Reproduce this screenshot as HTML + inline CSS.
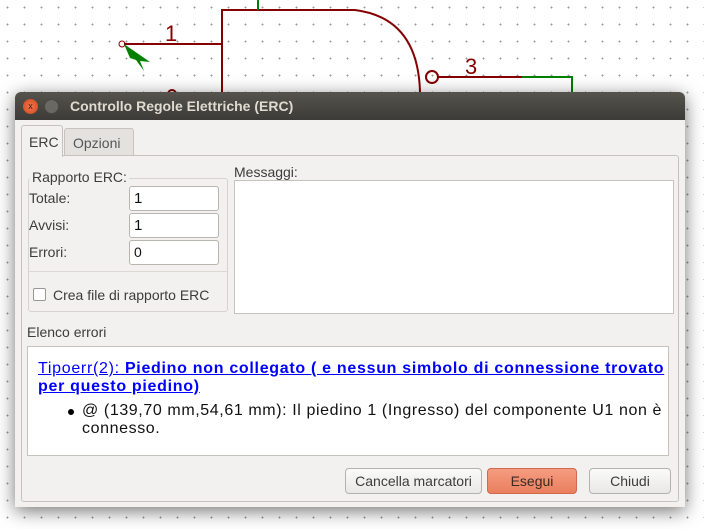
<!DOCTYPE html>
<html><head><meta charset="utf-8"><style>
*{box-sizing:border-box;margin:0;padding:0}
body{width:704px;height:529px;overflow:hidden;position:relative;font-family:"Liberation Sans","DejaVu Sans",sans-serif;font-size:14px;color:#3c3c3c;
background-color:#fff;background-image:radial-gradient(circle,#999 0.8px,transparent 1px);background-size:17px 17px;background-position:-1px -1px}
.abs{position:absolute}
.dlg{left:15px;top:92px;width:670px;height:415px;background:#f2f1f0;border-radius:6px 6px 0 0;box-shadow:0 4px 18px rgba(0,0,0,.55)}
.title{left:0;top:0;width:670px;height:28px;background:linear-gradient(#55534d,#3c3b37);border-radius:6px 6px 0 0;color:#dfdbd2;font-weight:bold;font-size:14px;line-height:28px;padding-left:55px}
.inp{background:#fff;border:1px solid #b8b5b0;border-radius:3px;font-size:15px;color:#111;padding-left:4px;line-height:23px}
.btn{border:1px solid #b5b2ad;border-radius:4px;background:linear-gradient(#fafaf9,#e9e8e6);text-align:center;line-height:24px;font-size:14px;color:#3c3c3c}
</style></head><body>
<svg class="abs" style="left:0;top:0" width="704" height="100">
<g stroke="#840000" stroke-width="2" fill="none">
<line x1="124" y1="44" x2="222" y2="44"/>
<line x1="222" y1="9" x2="222" y2="100"/>
<line x1="222" y1="10" x2="355" y2="10"/>
<path d="M355 10 Q418 18 420 92"/>
<circle cx="432" cy="77" r="6"/>
<line x1="438" y1="77" x2="522" y2="77"/>
</g>
<circle cx="122" cy="44" r="3" stroke="#840000" fill="none" stroke-width="1"/>
<g stroke="#008000" stroke-width="2" fill="none"><line x1="258" y1="0" x2="258" y2="10"/><polyline points="522,77 572,77 572,100"/></g>
<path d="M124 44 L150 62 L140 61 L144 71 L136 60 L130 58 Z" fill="#008000"/>
<text x="165" y="41" fill="#840000" font-size="22" font-family="Liberation Sans">1</text>
<text x="465" y="74" fill="#840000" font-size="22" font-family="Liberation Sans">3</text>
<circle cx="172" cy="94" r="4" stroke="#840000" fill="none" stroke-width="2"/>
</svg>
<div class="abs dlg">
<div class="abs title">Controllo Regole Elettriche (ERC)</div>
<div class="abs" style="left:8px;top:7px;width:15px;height:15px;border-radius:50%;background:radial-gradient(#f07a50,#d2431b);color:#3c1a0c;font-size:9px;text-align:center;line-height:15px">x</div>
<div class="abs" style="left:29px;top:7px;width:15px;height:15px;border-radius:50%;background:#6a6863;border:1px solid #4a4844"></div>
<div class="abs" style="left:6px;top:63px;width:658px;height:347px;border:1px solid #c6c3be;border-radius:3px;background:#f2f1f0"></div>
<div class="abs" style="left:6px;top:33px;width:42px;height:32px;border:1px solid #c6c3be;border-bottom:none;border-radius:3px 3px 0 0;background:#f2f1f0;padding:8px 0 0 7px">ERC</div>
<div class="abs" style="left:49px;top:36px;width:70px;height:28px;border:1px solid #c6c3be;border-radius:3px 3px 0 0;background:#e4e2df;padding:6px 0 0 8px;color:#555">Opzioni</div>
<div class="abs" style="left:13px;top:86px;width:200px;height:134px;border:1px solid #d6d3cf;border-radius:3px"></div>
<div class="abs" style="left:15px;top:77px;background:#f2f1f0;padding:0 2px">Rapporto ERC:</div>
<div class="abs" style="left:14px;top:98px">Totale:</div>
<div class="abs" style="left:14px;top:125px">Avvisi:</div>
<div class="abs" style="left:14px;top:152px">Errori:</div>
<div class="abs inp" style="left:114px;top:94px;width:90px;height:25px">1</div>
<div class="abs inp" style="left:114px;top:121px;width:90px;height:25px">1</div>
<div class="abs inp" style="left:114px;top:148px;width:90px;height:25px;font-size:14px">0</div>
<div class="abs" style="left:14px;top:179px;width:198px;height:1px;background:#dcd9d5"></div>
<div class="abs" style="left:18px;top:196px;width:13px;height:13px;border:1px solid #9a9792;border-radius:2px;background:#fff"></div>
<div class="abs" style="left:38px;top:195px">Crea file di rapporto ERC</div>
<div class="abs" style="left:219px;top:72px">Messaggi:</div>
<div class="abs" style="left:219px;top:88px;width:440px;height:134px;background:#fff;border:1px solid #c6c3be"></div>
<div class="abs" style="left:12px;top:232px">Elenco errori</div>
<div class="abs" style="left:12px;top:254px;width:642px;height:110px;background:#fff;border:1px solid #c6c3be;padding:13px 0 0 10px;font-size:16px;line-height:18px;color:#00f;letter-spacing:0.7px">
<div style="text-decoration:underline;width:630px;white-space:nowrap;overflow:hidden">Tipoerr(2): <b>Piedino non collegato ( e nessun simbolo di connessione trovato</b></div>
<div style="text-decoration:underline"><b>per questo piedino)</b></div>
<div style="color:#111;padding-left:44px;position:relative;margin-top:6px;width:640px;white-space:nowrap;letter-spacing:0.6px"><span style="position:absolute;left:30px;top:7px;width:6px;height:6px;border-radius:50%;background:#000"></span>@ (139,70 mm,54,61 mm): Il piedino 1 (Ingresso) del componente U1 non è</div>
<div style="color:#111;padding-left:44px;letter-spacing:0.6px">connesso.</div>
</div>
<div class="abs btn" style="left:330px;top:376px;width:137px;height:26px">Cancella marcatori</div>
<div class="abs btn" style="left:472px;top:376px;width:90px;height:26px;background:linear-gradient(#f59c80,#ea7f5f);border-color:#d06a4c;color:#3c2a24">Esegui</div>
<div class="abs btn" style="left:574px;top:376px;width:82px;height:26px">Chiudi</div>
</div>
</body></html>
